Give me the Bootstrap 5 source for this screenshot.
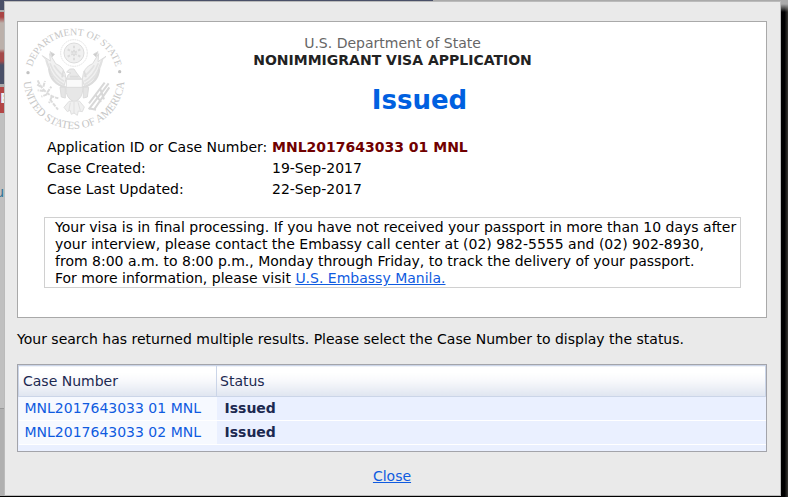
<!DOCTYPE html>
<html lang="en">
<head>
<meta charset="utf-8">
<meta name="viewport" content="width=device-width, initial-scale=1">
<title>Visa Status</title>
<link href="https://cdn.jsdelivr.net/npm/bootstrap@5.3.0/dist/css/bootstrap.min.css" rel="stylesheet">
<style>
  body { font: 14px/17px Verdana, "DejaVu Sans", sans-serif; color: #000; background: #000; }
  a { color: #0f5be0; }
  .stage { min-height: 100vh; padding: 1px 7px 1px 0; background: linear-gradient(90deg, #4a5068 55%, #aaa 55%) 0 0 / 100% 1px no-repeat,
    linear-gradient(#aaa 4px, transparent 12px) 100% 0 / 7px 100% no-repeat,
    linear-gradient(90deg, #000 50%, #383632) 100% 0 / 7px 100% no-repeat; }
  .backdrop-strip { width: 4px; background: linear-gradient(#4a5068 9px, #aaa 9px 11px, #a44 11px 16px, #bbb0aa 22px 48px, #a44a4a 52px 60px, #4a5068 64px 83px, #aaa 83px 86px, #b34545 86px 112px, #c0c0c0 112px 407px, #999 407px 408px, #b0b0b0 408px); }
  .peek { left: 0; width: 4px; overflow: hidden; }
  .peek-banner { top: 89px; color: #eee; }
  .peek-link { top: 183px; color: #2f7496; direction: rtl; }
  .dialog-panel { background: #eaeaea; border: 1px solid #bbb; padding: 19px 13px 0 12px; }
  .status-box { background: #fff; border: 1px solid #a9a9a9; padding: 13px 25px 30px 26px; }
  .seal { left: 1px; top: 2px; width: 110px; height: 110px; }
  .seal text { font-family: "Liberation Serif", serif; fill: #c6c6c6; }
  .agency { color: #666; }
  .form-title { font-size: 14px; line-height: 17px; color: #222; }
  .issued { font-size: 26px; line-height: 32px; color: #0060e0; padding-left: 54px; margin: 15px 0 21px; }
  .facts { line-height: 21px; grid-template-columns: 225px 1fr; padding-left: 3px; }
  .case-id { color: #700000; }
  .notice { border: 1px solid #d0d0d0; padding: 1px 0 0 10px; margin-top: 17px; }
  .status-box { padding-bottom: 29px; }
  .prompt { margin: 13px 0 16px; }
  .results { border: 1px solid #a3a4aa; background: #eaf0ff; padding-bottom: 6px; }
  .results th { height: 31px; font-weight: 400; color: #1c2951; padding: 1px 4px 0; border: 1px solid #cbd5e8; background: linear-gradient(#fff 20%, #f7f8fb 50%, #dfe5f0); }
  .results th + th { padding-left: 3px; }
  .results td { height: 24px; padding: 0 8px; border-bottom: 1px solid #fff; color: #1c2951; }
  .results td:first-child { background: #f6f9ff; width: 198px; padding: 0 6px; }
</style>
<script src="https://cdn.jsdelivr.net/npm/bootstrap@5.3.0/dist/js/bootstrap.bundle.min.js"></script>
</head>
<body>
<div class="stage d-flex">
  <div class="backdrop-strip position-relative flex-shrink-0" aria-hidden="true">
    <span class="peek peek-banner position-absolute fw-bold">E</span>
    <span class="peek peek-link position-absolute">u</span>
  </div>
  <main class="dialog-panel flex-fill">
    <section class="status-box position-relative">
      <svg class="seal position-absolute" viewBox="57 72 330 330" role="img" aria-label="Department of State seal">
        <defs>
          <path id="arcTop" d="M92 236A130 130 0 0 1 352 236"/>
          <path id="arcBottom" d="M71 236A151 151 0 0 0 373 236"/>
        </defs>
        <text font-size="30" text-anchor="middle"><textPath href="#arcTop" startOffset="50%">DEPARTMENT OF STATE</textPath></text>
        <text font-size="33" text-anchor="middle"><textPath href="#arcBottom" startOffset="50%">UNITED STATES OF AMERICA</textPath></text>
        <circle cx="84" cy="218" r="5" fill="#c2c2c2"/><circle cx="359" cy="215" r="5" fill="#c2c2c2"/>
        <g fill="none" stroke="#dcdcdc" stroke-width="3">
          <circle cx="222" cy="159" r="40" stroke="#e4e4e4" stroke-dasharray="5 2"/>
          <circle cx="222" cy="159" r="30" fill="#f0f0f0"/>
          <path d="M222 137v44M203 148l38 22M203 170l38 -22" stroke-width="6" stroke-dasharray="8 4"/>
          <path d="M127 167l24 16l-2 -22l18 30q28 10 31 46l-8 28q-34 -20 -42 -64q-5 -22 -21 -34z" fill="#f1f1f1"/>
          <path d="M318 169l-24 16l2 -24l-18 30q-28 10 -31 46l8 28q34 -20 42 -64q5 -22 21 -32z" fill="#f1f1f1"/>
          <path d="M138 180q14 54 54 74M150 190q14 38 42 54M162 196q16 24 32 34M307 180q-14 54 -54 74M295 190q-14 38 -42 54M283 196q-16 24 -32 34" stroke-width="5" stroke="#e2e2e2"/>
          <path d="M147 206q4 44 50 56M298 206q-4 44 -50 56" stroke-width="6"/>
          <path d="M150 155l14 8l-8 8zM294 155l-14 8l8 8z" fill="#ccc"/>
          <path d="M199 237q4 -16 14 -18l-13 -3q8 -13 22 -9l8 12l14 18z" fill="#e9e9e9"/>
          <path d="M190 212l-4 20M252 212l6 20M210 230h26" stroke-width="5"/>
          <path d="M199 238h48v26h-48z" fill="#fafafa"/>
          <path d="M197 262h52q0 34 -26 44q-26 -10 -26 -44z" fill="#e7e7e7"/>
          <path d="M180 262h16v32l-12 -3zM250 262h16l-4 29l-12 3z" fill="#e5e5e5"/>
          <path d="M207 304l-15 18l10 13l8 -5l4 13l8 -4l10 7l3 -13l12 2l6 -14l-15 -18zM211 308l-5 26M222 306v34M234 307l7 25" fill="#f0f0f0" stroke="#e0e0e0"/>
          <path d="M113 241q20 44 62 54M122 260l-12 -7M131 273l-18 -2M141 283l-17 7M155 291l-8 18M130 260l5 -17M142 277l12 -17M150 298l24 31" stroke-width="6" stroke-dasharray="12 3"/>
          <path d="M326 250l-60 78M314 248l-47 62M328 262l-46 67M301 267l11 31M287 285l16 21M266 325l22 4" stroke="#d8d8d8" stroke-width="6"/>
        </g>
      </svg>
      <header class="text-center">
        <div class="agency">U.S. Department of State</div>
        <h1 class="form-title fw-bold mb-0">NONIMMIGRANT VISA APPLICATION</h1>
        <p class="issued fw-bold">Issued</p>
      </header>
      <dl class="facts d-grid mb-0">
        <dt class="fw-normal">Application ID or Case Number:</dt><dd class="case-id fw-bold mb-0">MNL2017643033 01 MNL</dd>
        <dt class="fw-normal">Case Created:</dt><dd class="mb-0">19-Sep-2017</dd>
        <dt class="fw-normal">Case Last Updated:</dt><dd class="mb-0">22-Sep-2017</dd>
      </dl>
      <p class="notice text-nowrap mb-0">Your visa is in final processing. If you have not received your passport in more than 10 days after<br>your interview, please contact the Embassy call center at (02) 982-5555 and (02) 902-8930,<br>from 8:00 a.m. to 8:00 p.m., Monday through Friday, to track the delivery of your passport.<br>For more information, please visit <a href="#">U.S. Embassy Manila.</a></p>
    </section>
    <p class="prompt">Your search has returned multiple results. Please select the Case Number to display the status.</p>
    <div class="results">
      <table class="w-100">
        <thead><tr><th scope="col">Case Number</th><th scope="col">Status</th></tr></thead>
        <tbody>
          <tr><td><a class="text-decoration-none" href="#">MNL2017643033 01 MNL</a></td><td class="fw-bold">Issued</td></tr>
          <tr><td><a class="text-decoration-none" href="#">MNL2017643033 02 MNL</a></td><td class="fw-bold">Issued</td></tr>
        </tbody>
      </table>
    </div>
    <div class="text-center pt-3"><a href="#">Close</a></div>
  </main>
</div>
</body>
</html>
